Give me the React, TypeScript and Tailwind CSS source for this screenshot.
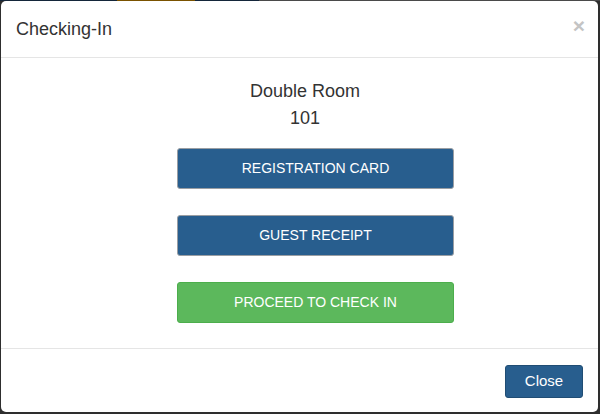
import React from 'react';

const ActionButton: React.FC<{ label: string; green?: boolean }> = ({ label, green }) => (
  <button
    className={`ml-[161px] w-[277px] h-[41px] rounded-[3px] border text-[14px] text-white uppercase ${
      green ? 'bg-[#5cb85c] border-[#4cae4c]' : 'bg-[#285e8e] border-[#9a9ea3]'
    }`}
  >
    {label}
  </button>
);

export default function App() {
  return (
    <div className="relative w-[600px] h-[414px] overflow-hidden bg-[#2e2e2e] font-['Liberation_Sans',Arial,sans-serif]">
      {/* page behind the backdrop */}
      <div className="flex h-px">
        <div className="w-[117px] bg-[#14263a]" />
        <div className="w-[78px] bg-[#7a5200]" />
        <div className="w-[64px] bg-[#14263a]" />
        <div className="flex-1 bg-[#4a4a4a]" />
      </div>

      <div className="ml-px w-[597px] h-[411px] bg-white rounded-[5px] flex flex-col text-[#333]">
        <div className="h-[57px] shrink-0 border-b border-[#e5e5e5] px-[15px] flex items-center justify-between">
          <h4 className="text-[18px] leading-[26px]">Checking-In</h4>
          <span className="text-[21px] font-bold leading-none text-[#c4c4c4] -mr-[2px] -mt-[7px]">×</span>
        </div>

        <div className="h-[291px] shrink-0 border-b border-[#e5e5e5] px-[15px] pt-[20px] flex flex-col">
          <div className="pl-[11px] text-center text-[18px] leading-[27px]">
            <div>Double Room</div>
            <div>101</div>
          </div>
          <div className="mt-[16px] flex flex-col gap-[26px]">
            <ActionButton label="Registration Card" />
            <ActionButton label="Guest Receipt" />
            <ActionButton label="Proceed to Check In" green />
          </div>
        </div>

        <div className="flex-1 px-[15px] pt-[16px] flex justify-end">
          <button className="w-[78px] h-[33px] rounded-[3px] bg-[#285e8e] border border-[#204d74] text-white text-[15px]">
            Close
          </button>
        </div>
      </div>
    </div>
  );
}
